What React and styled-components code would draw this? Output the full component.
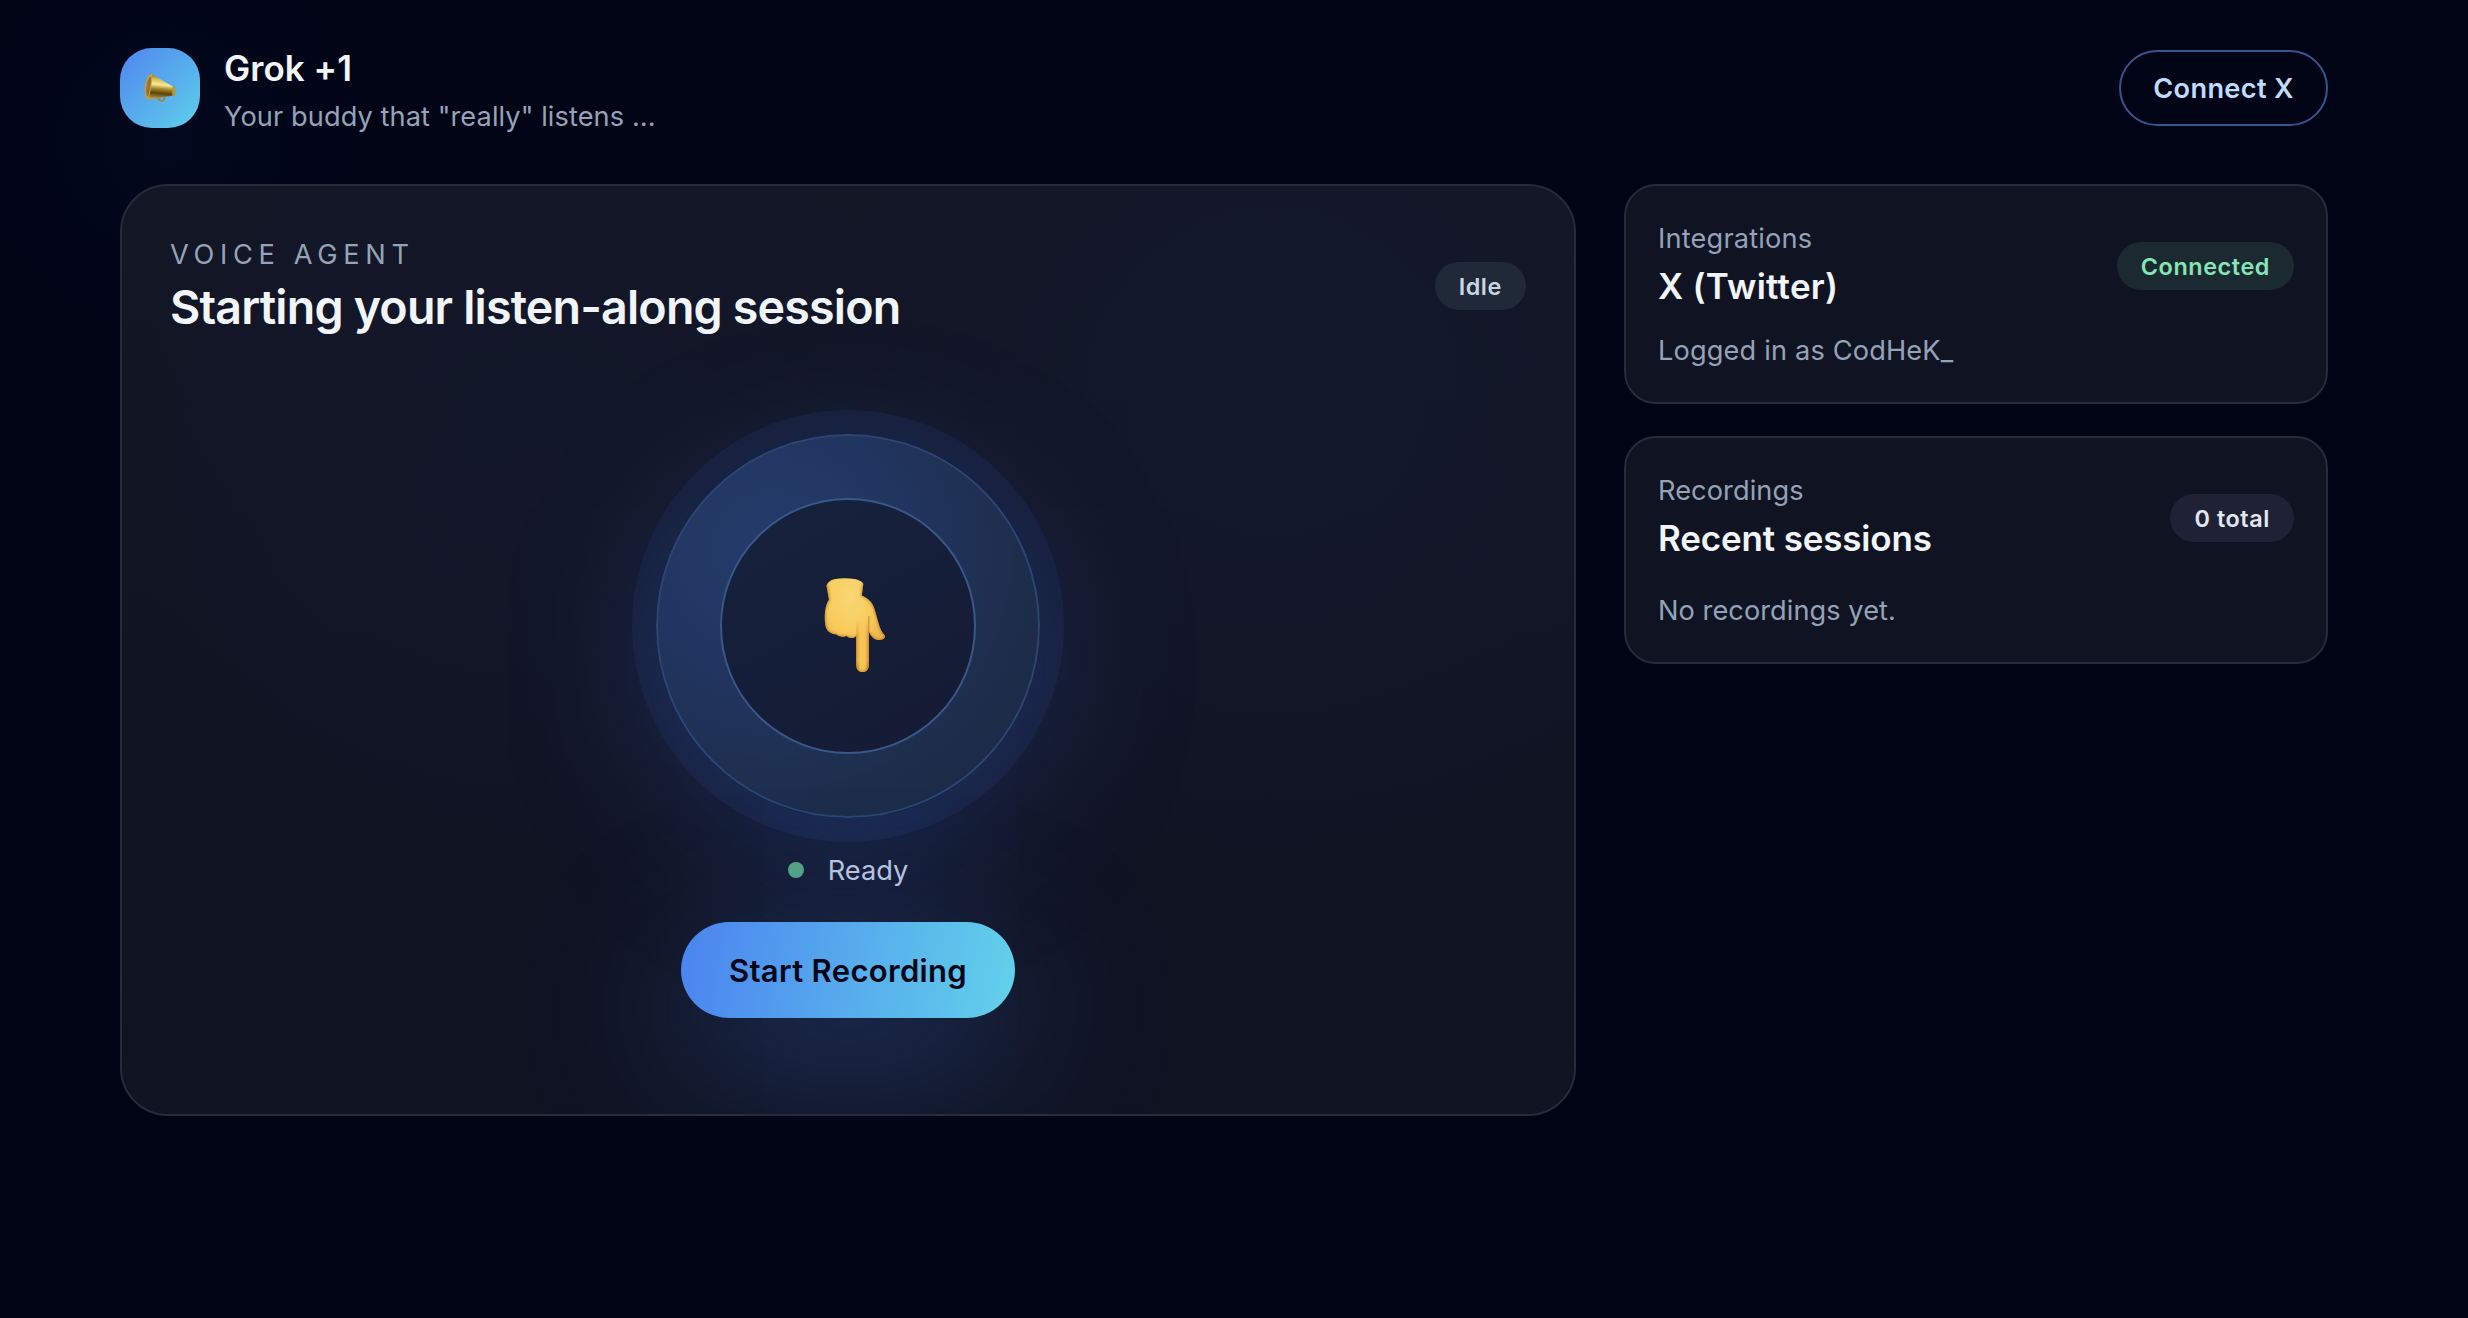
import React from 'react';
import styled, { createGlobalStyle } from 'styled-components';

const GlobalStyle = createGlobalStyle`
  * {
    box-sizing: border-box;
  }

  body {
    margin: 0;
    background: #010415;
    color: #f1f5f9;
    font-family: Inter, 'Liberation Sans', sans-serif;
    -webkit-font-smoothing: antialiased;
  }

  h1, h2, p {
    margin: 0;
  }
`;

const Page = styled.div`
  min-height: 100vh;
  padding: 40px 140px 0 120px;
  background:
    radial-gradient(circle at 170px 140px, rgba(37, 99, 235, 0.045), transparent 200px),
    #010415;
`;

const Header = styled.header`
  display: flex;
  align-items: center;
  justify-content: space-between;
  margin-bottom: 48px;
`;

const Brand = styled.div`
  display: flex;
  align-items: center;
  gap: 24px;
`;

const Logo = styled.div`
  display: flex;
  align-items: center;
  justify-content: center;
  width: 80px;
  height: 80px;
  border-radius: 32px;
  background: linear-gradient(135deg, #4f86f0, #5fd0ea);
`;

const BrandName = styled.h1`
  font-size: 35px;
  font-weight: 600;
  line-height: 56px;
  letter-spacing: 0.04px;
`;

const Muted = styled.p`
  padding-top: 2px;
  color: #94a3b8;
  font-size: 27.2px;
  line-height: 38px;
  letter-spacing: ${({ $tracking }) => $tracking || '0.15px'};
  margin-top: ${({ $top }) => $top || 0};
`;

const ConnectButton = styled.button`
  padding: 17px 32px 15px;
  border: 2px solid #35568c;
  border-radius: 999px;
  background: transparent;
  color: #bfdbfe;
  font: 600 27.2px/40px Inter, 'Liberation Sans', sans-serif;
  letter-spacing: 0.34px;
`;

const Columns = styled.main`
  display: grid;
  grid-template-columns: 1456px 704px;
  gap: 48px;
  align-items: start;
`;

const Sidebar = styled.aside`
  display: flex;
  flex-direction: column;
  gap: 32px;
`;

const Card = styled.section`
  padding: 32px;
  border: 2px solid #282a38;
  border-radius: 32px;
  background: #101321;
`;

const AgentCard = styled(Card)`
  padding: 48px;
  border-radius: 48px;
  background:
    radial-gradient(circle at 1150px 215px, rgba(19, 26, 48, 0.5) 120px, transparent 480px),
    radial-gradient(circle at 430px 270px, rgba(19, 26, 48, 0.4) 80px, transparent 420px),
    linear-gradient(180deg, #131625, #101322);
  overflow: hidden;
`;

const CardHead = styled.div`
  display: flex;
  align-items: center;
  justify-content: space-between;
`;

const Eyebrow = styled.p`
  padding-top: 2px;
  color: #94a3b8;
  font-size: 27.2px;
  line-height: 38px;
  letter-spacing: 5.68px;
  text-transform: uppercase;
`;

const AgentTitle = styled.h2`
  padding-top: 2px;
  font-size: 46.6px;
  font-weight: 600;
  line-height: 62px;
  letter-spacing: -0.83px;
`;

const CardTitle = styled.h2`
  font-size: 35px;
  font-weight: 600;
  line-height: 56px;
  letter-spacing: ${({ $tracking }) => $tracking};
`;

const tones = {
  idle: ['#1f2937', '#cbd5e1'],
  success: ['#1b2a31', '#86e5b6'],
  neutral: ['#1f2235', '#e2e8f0'],
};

const Pill = styled.span`
  padding: 9px 24px 7px;
  border-radius: 999px;
  background: ${({ $tone }) => tones[$tone][0]};
  color: ${({ $tone }) => tones[$tone][1]};
  font-size: 23.4px;
  font-weight: 600;
  line-height: 32px;
  letter-spacing: 0.58px;
  white-space: nowrap;
`;

const Session = styled.div`
  display: flex;
  flex-direction: column;
  align-items: center;
  gap: 32px;
  margin-top: 48px;
  padding: 48px 0;
`;

const Orb = styled.div`
  display: flex;
  align-items: center;
  justify-content: center;
  width: 384px;
  height: 384px;
  border: 2px solid #2b4575;
  border-radius: 50%;
  background: radial-gradient(circle at 30% 30%, #243c6c, #22355f 35%, #1d2e4d 65%, #1a2840 95%);
  box-shadow:
    0 0 0 24px rgba(59, 130, 246, 0.08),
    0 40px 160px rgba(65, 115, 240, 0.26);
`;

const OrbCore = styled.div`
  display: flex;
  align-items: center;
  justify-content: center;
  width: 256px;
  height: 256px;
  border: 2px solid #38578a;
  border-radius: 50%;
  background: linear-gradient(150deg, #16223d, #151e38 50%, #151a34);
`;

const Status = styled.div`
  display: flex;
  align-items: center;
  gap: 24px;
  color: #bac7e0;
  font-size: 27.2px;
  line-height: 40px;
`;

const StatusDot = styled.span`
  width: 16px;
  height: 16px;
  border-radius: 50%;
  background: #55a384;
`;

const StatusText = styled.span`
  padding-top: 2px;
  line-height: 38px;
`;

const RecordButton = styled.button`
  padding: 25px 48px 23px;
  border: 0;
  border-radius: 999px;
  background: linear-gradient(100deg, #4b83f0, #62d2ea);
  box-shadow: 0 40px 160px rgba(65, 125, 240, 0.38);
  color: #020617;
  font: 600 31px/48px Inter, 'Liberation Sans', sans-serif;
  letter-spacing: 0.33px;
`;

const MegaphoneIcon = styled(({ className }) => (
  <svg className={className} width="32" height="30" viewBox="0 0 32 30">
    <defs>
      <linearGradient id="brass" x1="0.5" y1="0" x2="0.4" y2="1">
        <stop offset="0" stopColor="#7d6220" />
        <stop offset="0.22" stopColor="#d9bd50" />
        <stop offset="0.42" stopColor="#f7ea98" />
        <stop offset="0.58" stopColor="#a98a26" />
        <stop offset="0.76" stopColor="#57430e" />
        <stop offset="1" stopColor="#c9a03a" />
      </linearGradient>
    </defs>
    <path d="M14 23.500 q0 4.300 3.600 4.300 q3.200 0 3.200-4.500" fill="none" stroke="#a58632" strokeWidth="1.8" />
    <path d="M7.800 1 L29.500 14 V22.500 L4 26.400 Z" fill="url(#brass)" />
    <rect x="28.200" y="13.300" width="3" height="10.200" rx="1.500" fill="#b8942f" />
    <path d="M8.300 1 C4 .5 1 8 .9 16 C.8 22 1.600 26.500 4.600 26.500 C6 22 8.500 9 8.300 1 Z" fill="#c9a23c" />
    <path d="M7 3.500 C4.500 4 2.200 10 2.200 16 C2.200 20.500 2.600 23.500 4 24 C5.500 19 7 11 7 3.500 Z" fill="#8e7238" />
    <path d="M3.600 9 C2.600 12 2.300 15 2.500 17.500 L4.300 15 Z" fill="#dd6a2c" />
  </svg>
))`
  margin-right: 1px;
`;

const HandIcon = styled(({ className }) => (
  <svg className={className} width="62" height="95" viewBox="0 0 62 95">
    <defs>
      <radialGradient id="palm" cx="0.42" cy="0.2" r="0.75">
        <stop offset="0" stopColor="#f8d775" />
        <stop offset="0.45" stopColor="#f8cd5e" />
        <stop offset="1" stopColor="#e9ae42" />
      </radialGradient>
      <linearGradient id="finger" x1="0" x2="1">
        <stop offset="0" stopColor="#dc9836" />
        <stop offset="0.3" stopColor="#f6c655" />
        <stop offset="0.7" stopColor="#f6c655" />
        <stop offset="1" stopColor="#d98f2f" />
      </linearGradient>
      <linearGradient id="fade" x1="0" y1="0" x2="0" y2="1">
        <stop offset="0" stopColor="#fff" stopOpacity="0" />
        <stop offset="0.35" stopColor="#fff" />
      </linearGradient>
      <mask id="fingerMask">
        <rect x="30" y="42" width="16" height="53" fill="url(#fade)" />
      </mask>
      <filter id="edge" x="-10%" y="-10%" width="120%" height="120%">
        <feGaussianBlur stdDeviation="1.1" />
      </filter>
      <clipPath id="handShape">
        <path d="M2.500 7.500 Q4 3 10 1.3 Q20 -.8 32 1.3 Q38 3 39.300 6 L37.800 17.500 C43 20 48 23 50.500 31 L54.500 45 C56 51 58 54.500 60.500 57 C62 59.500 60 61.500 56 62 C51 62.200 48 60 45.500 55 L44.800 53 V87 Q44.500 94 38.500 94 Q32.500 94 32.300 87 V58 Q30 60.500 27.500 60 Q24.500 60 22.500 58 Q20 59 17.500 58.500 Q14.500 58.500 12.500 56.500 Q9 56.500 6 54.500 C2 52 .8 47 .8 40 C.5 33 2 26 5 21.500 Z" />
      </clipPath>
    </defs>
    <g clipPath="url(#handShape)">
      <rect width="62" height="95" fill="url(#palm)" />
      <rect x="32.300" y="42" width="12.500" height="53" fill="url(#finger)" mask="url(#fingerMask)" />
      <path d="M44.800 38 V56" stroke="#c98a2f" strokeWidth="1.300" opacity=".8" />
      <path d="M3 7 L5 21.500 C2 26 .5 33 .8 40 C.8 47 2 52 6 54.500 Q9 56.500 12.500 56.500 Q14.500 58.500 17.500 58.500 Q20 59 22.500 58 Q24.500 60 27.500 60 Q30 60.500 32.300 58 M39.300 6 L37.800 17.500 C43 20 48 23 50.500 31 L54.500 45 C56 51 58 54.500 60.500 57 C62 59.500 60 61.500 56 62 C51 62.200 48 60 45.500 55 M32.300 85 Q32.500 94 38.500 94 Q44.500 94 44.800 85" fill="none" stroke="#c57a20" strokeWidth="2.400" opacity=".7" filter="url(#edge)" />
    </g>
  </svg>
))`
  margin: 0 0 1px 13px;
`;

const App = () => (
  <Page>
    <GlobalStyle />
    <Header>
      <Brand>
        <Logo><MegaphoneIcon /></Logo>
        <div>
          <BrandName>Grok +1</BrandName>
          <Muted $tracking="0.08px">Your buddy that "really" listens ...</Muted>
        </div>
      </Brand>
      <ConnectButton>Connect X</ConnectButton>
    </Header>
    <Columns>
      <AgentCard>
        <CardHead>
          <div>
            <Eyebrow>Voice Agent</Eyebrow>
            <AgentTitle>Starting your listen-along session</AgentTitle>
          </div>
          <Pill $tone="idle">Idle</Pill>
        </CardHead>
        <Session>
          <Orb>
            <OrbCore><HandIcon /></OrbCore>
          </Orb>
          <Status>
            <StatusDot />
            <StatusText>Ready</StatusText>
          </Status>
          <RecordButton>Start Recording</RecordButton>
        </Session>
      </AgentCard>
      <Sidebar>
        <Card>
          <CardHead>
            <div>
              <Muted $tracking="0.18px">Integrations</Muted>
              <CardTitle $tracking="0.26px">X (Twitter)</CardTitle>
            </div>
            <Pill $tone="success">Connected</Pill>
          </CardHead>
          <Muted $top="16px" $tracking="0.15px">Logged in as CodHeK_</Muted>
        </Card>
        <Card>
          <CardHead>
            <div>
              <Muted $tracking="0.08px">Recordings</Muted>
              <CardTitle $tracking="-0.16px">Recent sessions</CardTitle>
            </div>
            <Pill $tone="neutral">0 total</Pill>
          </CardHead>
          <Muted $top="24px" $tracking="0.05px">No recordings yet.</Muted>
        </Card>
      </Sidebar>
    </Columns>
  </Page>
);

export default App;
